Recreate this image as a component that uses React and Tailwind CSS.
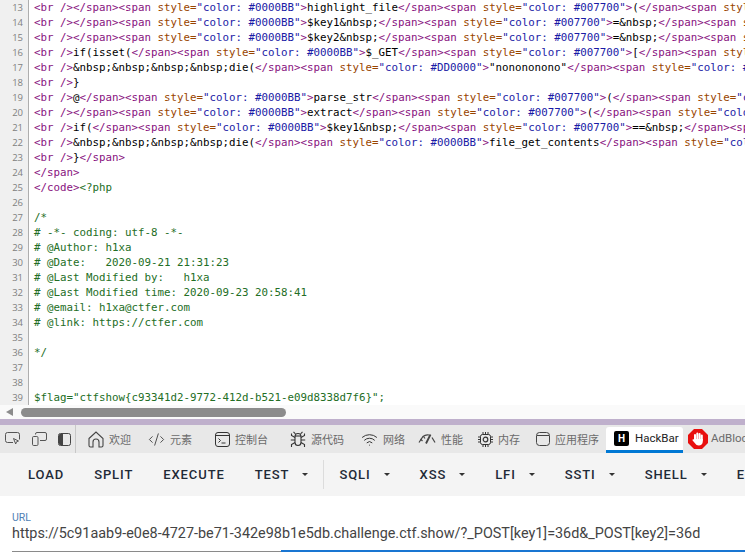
import { CodeXml, Wifi } from "lucide-react";

const OPEN = '<span style="color: ';
const lines = [
  [13, '<br /></span><span style="color: #0000BB">highlight_file</span><span style="color: #007700">(</span><span style="color: #0000BB">__FILE__</span>'],
  [14, '<br /></span><span style="color: #0000BB">$key1&nbsp;</span><span style="color: #007700">=&nbsp;</span><span style="color: #0000BB">0</span>'],
  [15, '<br /></span><span style="color: #0000BB">$key2&nbsp;</span><span style="color: #007700">=&nbsp;</span><span style="color: #0000BB">0</span>'],
  [16, '<br />if(isset(</span><span style="color: #0000BB">$_GET</span><span style="color: #007700">[</span><span style="color: #DD0000">\'key1\'</span>'],
  [17, '<br />&nbsp;&nbsp;&nbsp;&nbsp;die(</span><span style="color: #DD0000">"nonononono"</span><span style="color: #007700">);</span>'],
  [18, "<br />}"],
  [19, '<br />@</span><span style="color: #0000BB">parse_str</span><span style="color: #007700">(</span><span style="color: #0000BB">$_POST</span>'],
  [20, '<br /></span><span style="color: #0000BB">extract</span><span style="color: #007700">(</span><span style="color: #0000BB">$_POST</span>'],
  [21, '<br />if(</span><span style="color: #0000BB">$key1&nbsp;</span><span style="color: #007700">==&nbsp;</span><span style="color: #DD0000">\'36d\'</span>'],
  [22, '<br />&nbsp;&nbsp;&nbsp;&nbsp;die(</span><span style="color: #0000BB">file_get_contents</span><span style="color: #007700">(</span>'],
  [23, "<br />}</span>"],
  [24, "</span>"],
  [25, "</code><?php"],
  [26, ""],
  [27, "/*", true],
  [28, "# -*- coding: utf-8 -*-", true],
  [29, "# @Author: h1xa", true],
  [30, "# @Date:   2020-09-21 21:31:23", true],
  [31, "# @Last Modified by:   h1xa", true],
  [32, "# @Last Modified time: 2020-09-23 20:58:41", true],
  [33, "# @email: h1xa@ctfer.com", true],
  [34, "# @link: https://ctfer.com", true],
  [35, ""],
  [36, "*/", true],
  [37, ""],
  [38, ""],
  [39, '$flag="ctfshow{c93341d2-9772-412d-b521-e09d8338d7f6}";', true],
];

// split one view-source line into tag / attribute / value / plain pieces
function Source({ text }) {
  const parts = text.split(/(<span style="color: #[0-9A-F]{6}">|<\/?[a-z]+(?: \/)?>|<br \/>|<\?php)/);
  return parts.map((part, i) => {
    if (part.startsWith(OPEN)) {
      return (
        <span key={i}>
          <span className="text-[#881280]">&lt;span</span>
          <span className="text-[#994500]"> style=</span>
          <span className="text-[#1a1aa6]">{part.slice(12, -1)}</span>
          <span className="text-[#881280]">&gt;</span>
        </span>
      );
    }
    if (part === "<?php") return <span key={i} className="text-[#236e25]">{part}</span>;
    if (part.startsWith("<")) return <span key={i} className="text-[#881280]">{part}</span>;
    return <span key={i}>{part}</span>;
  });
}

function InspectIcon() {
  return (
    <svg width="16" height="14" viewBox="0 0 16 14" fill="none" stroke="#555" strokeWidth="1">
      <path d="M8 10.5H2.5a2 2 0 0 1-2-2v-6a2 2 0 0 1 2-2h10a2 2 0 0 1 2 2v5" />
      <path d="M8.5 6.5l5 2.5-2 .8-.8 2.2z" />
    </svg>
  );
}

function DeviceIcon() {
  return (
    <svg width="15" height="14" viewBox="0 0 15 14" fill="none" stroke="#555" strokeWidth="1">
      <rect x="0.5" y="4.5" width="5.5" height="9" rx="1.2" />
      <path d="M3.5 2.5V2a1.5 1.5 0 0 1 1.5-1.5h8A1.5 1.5 0 0 1 14.5 2v5A1.5 1.5 0 0 1 13 8.5H8" />
    </svg>
  );
}

function DockIcon() {
  return (
    <svg width="13" height="13" viewBox="0 0 13 13">
      <rect x="0.5" y="0.5" width="12" height="12" rx="2" fill="none" stroke="#444" />
      <path d="M2 1h3v11H2.5A1.5 1.5 0 0 1 1 10.5v-8A1.5 1.5 0 0 1 2 1z" fill="#444" />
    </svg>
  );
}

function HomeIcon() {
  return (
    <svg width="16" height="17" viewBox="0 0 16 17" fill="none" stroke="#444" strokeWidth="1.1">
      <path d="M1 7.5 8 1l7 6.5v7a1.5 1.5 0 0 1-1.5 1.5H11v-5a3 3 0 0 0-6 0v5H2.5A1.5 1.5 0 0 1 1 14.5z" />
    </svg>
  );
}

function ConsoleIcon() {
  return (
    <svg width="15" height="15" viewBox="0 0 15 15" fill="none" stroke="#333" strokeWidth="1">
      <rect x="0.5" y="0.5" width="14" height="14" rx="2.5" />
      <path d="M1 3.5h13" />
      <path d="M3.5 6.5l2 2-2 2M6.5 11h4" />
    </svg>
  );
}

function BugIcon() {
  return (
    <svg width="16" height="17" viewBox="0 0 16 17" fill="none" stroke="#333" strokeWidth="1.1">
      <path d="M5 5.5a3 3 0 0 1 6 0v6a3 3 0 0 1-6 0z" />
      <path d="M5 5h6" />
      <path d="M5.5 3 3.5 .8M10.5 3l2-2.2" />
      <path d="M5 6.5 1.5 4.5V2.500M11 6.5l3.5-2V2.500M5 9H.8M11 9h4.2M5 11.5l-3.5 2V16M11 11.5l3.5 2V16" />
    </svg>
  );
}

function GaugeIcon() {
  return (
    <svg width="18" height="13" viewBox="0 0 18 13" fill="none" stroke="#444" strokeWidth="1.2">
      <path d="M1 9.5 5 3.5a7 7 0 0 1 6-1.5" />
      <path d="M14 4.5l3 5" />
      <path d="M8 10.5 12.5 1.5" strokeWidth="1.8" />
      <path d="M2.500 6l2 2M5.500 3.500l1.500 2" />
    </svg>
  );
}

function CpuIcon() {
  return (
    <svg width="15" height="15" viewBox="0 0 15 15" fill="none" stroke="#333" strokeWidth="1">
      <rect x="2.5" y="2.5" width="10" height="10" rx="2" />
      <circle cx="7.5" cy="7.5" r="2.3" strokeWidth="1.2" />
      <path d="M5 0v2.500M7.500 0v2.500M10 0v2.500M5 12.500V15M7.500 12.500V15M10 12.500V15M0 5h2.500M0 7.500h2.500M0 10h2.500M12.500 5H15M12.500 7.500H15M12.500 10H15" />
    </svg>
  );
}

function AppIcon() {
  return (
    <svg width="14" height="14" viewBox="0 0 14 14" fill="none" stroke="#444">
      <rect x="0.5" y="0.5" width="13" height="13" rx="3" />
      <path d="M1 3.5h12" />
    </svg>
  );
}

function AdBlockIcon() {
  return (
    <svg width="20" height="20" viewBox="0 0 20 20" className="shrink-0">
      <polygon points="6,0 14,0 20,6 20,14 14,20 6,20 0,14 0,6" fill="#e8100f" />
      <path d="M7 10V6M9.3 10V4.5M11.6 10V5M13.800 11V6.5" stroke="#fff" strokeWidth="2" strokeLinecap="round" />
      <path d="M6 10h8.800v2.500c0 2.500-1.800 4-4 4-1.800 0-2.800-.8-3.600-2L4.600 11.500c-.5-.8.500-1.700 1.400-1z" fill="#fff" />
    </svg>
  );
}

const tabs = [
  { label: "欢迎", icon: <HomeIcon />, w: "w-[60px]" },
  { label: "元素", icon: <CodeXml size={17} strokeWidth={1.2} color="#333" />, w: "w-[67px]" },
  { label: "控制台", icon: <ConsoleIcon />, w: "w-[75px]" },
  { label: "源代码", icon: <BugIcon />, w: "w-[71px]" },
  { label: "网络", icon: <Wifi size={17} strokeWidth={1.4} color="#333" />, w: "w-[57px]" },
  { label: "性能", icon: <GaugeIcon />, w: "w-[60px]" },
  { label: "内存", icon: <CpuIcon />, w: "w-[58px]" },
  { label: "应用程序", icon: <AppIcon />, w: "w-[70px]" },
];

const buttons = [
  { label: "LOAD" },
  { label: "SPLIT" },
  { label: "EXECUTE" },
  { label: "TEST", menu: true, line: true },
  { label: "SQLI", menu: true },
  { label: "XSS", menu: true },
  { label: "LFI", menu: true },
  { label: "SSTI", menu: true },
  { label: "SHELL", menu: true },
  { label: "ENCODING" },
];

export default function App() {
  return (
    <div className="w-[745px] h-[558px] overflow-hidden bg-white flex flex-col font-['Roboto',sans-serif]">
      {/* view-source pane */}
      <div className="h-[405px] overflow-hidden">
        <div className="font-['DejaVu_Sans_Mono',monospace] text-[10.8px] leading-[15px] text-black">
          {lines.map(([n, text, green]) => (
            <div key={n} className="flex h-[15px]">
              <div className="w-[29px] shrink-0 pr-[5px] text-right bg-[#f0f0f0] border-r border-[#aeaeae] text-[#808080] font-['Open_Sans',sans-serif] text-[9.5px]">
                {n}
              </div>
              <div className={`pl-[5px] whitespace-pre ${green ? "text-[#236e25]" : ""}`}>
                {green ? text : <Source text={text} />}
              </div>
            </div>
          ))}
        </div>
      </div>

      {/* horizontal scrollbar */}
      <div className="h-[14px] bg-[#fafafa] flex items-center pl-[6px] gap-[8px]">
        <div className="w-0 h-0 border-y-[4px] border-y-transparent border-r-[7px] border-r-[#8c8c8c]" />
        <div className="w-[265px] h-[9px] rounded-full bg-[#8c8c8c]" />
      </div>

      <div className="h-[6px] bg-[#bfb0cc]" />

      {/* devtools tabs */}
      <div className="h-[28px] bg-[#e8e8e8] flex items-center overflow-hidden">
        <div className="w-[76px] h-full shrink-0 flex items-center pl-[5px] gap-[11px] border-r border-[#c8c8c8]">
          <InspectIcon />
          <DeviceIcon />
          <DockIcon />
        </div>
        <div className="flex items-center pl-[12px] text-[11px] text-[#6b6b6b] font-['Noto_Sans_CJK_SC',sans-serif]">
          {tabs.map((tab) => (
            <div key={tab.label} className={`${tab.w} shrink-0 flex items-center gap-[5px]`}>
              {tab.icon}
              <span>{tab.label}</span>
            </div>
          ))}
        </div>
        <div className="self-end h-[26px] w-[77px] shrink-0 flex items-center gap-[6px] pl-[8px] bg-white rounded-t-[3px] border-b-[3px] border-[#0078d4]">
          <div className="w-[15px] h-[15px] rounded-[2px] bg-black text-white text-[10px] font-bold flex items-center justify-center">H</div>
          <span className="text-[11.5px] text-[#222]">HackBar</span>
        </div>
        <div className="flex items-center gap-[3px] pl-[5px] shrink-0">
          <AdBlockIcon />
          <span className="text-[11.5px] text-[#6b6b6b]">AdBlock</span>
        </div>
      </div>

      {/* hackbar toolbar */}
      <div className="h-[43px] bg-[#f4f4f4] flex items-center pl-[13px] overflow-hidden">
        {buttons.map((b) => (
          <div key={b.label} className="flex items-center shrink-0">
            <div className="flex items-center px-[15px] text-[13px] font-medium tracking-[0.9px] text-[#1f2a37]">
              <span>{b.label}</span>
              {b.menu && <span className="ml-[13px] w-0 h-0 border-x-[3px] border-x-transparent border-t-[3px] border-t-[#333]" />}
            </div>
            {b.line && <div className="w-px h-[29px] bg-[#dcdcdc]" />}
          </div>
        ))}
      </div>

      {/* url field */}
      <div className="flex-1 pl-[12px] pt-[16px]">
        <div className="text-[10.5px] leading-[12px] text-[#4f7fb5]">URL</div>
        <div className="text-[14.4px] leading-[20px] pb-[6px] text-[#444] whitespace-nowrap">
          https://5c91aab9-e0e8-4727-be71-342e98b1e5db.challenge.ctf.show/?_POST[key1]=36d&amp;_POST[key2]=36d
        </div>
        <div className="flex items-end h-[2px]">
          <div className="w-[269px] h-px bg-[#8a8a8a]" />
          <div className="flex-1 h-[2px] bg-[#1976d2]" />
        </div>
      </div>
    </div>
  );
}
